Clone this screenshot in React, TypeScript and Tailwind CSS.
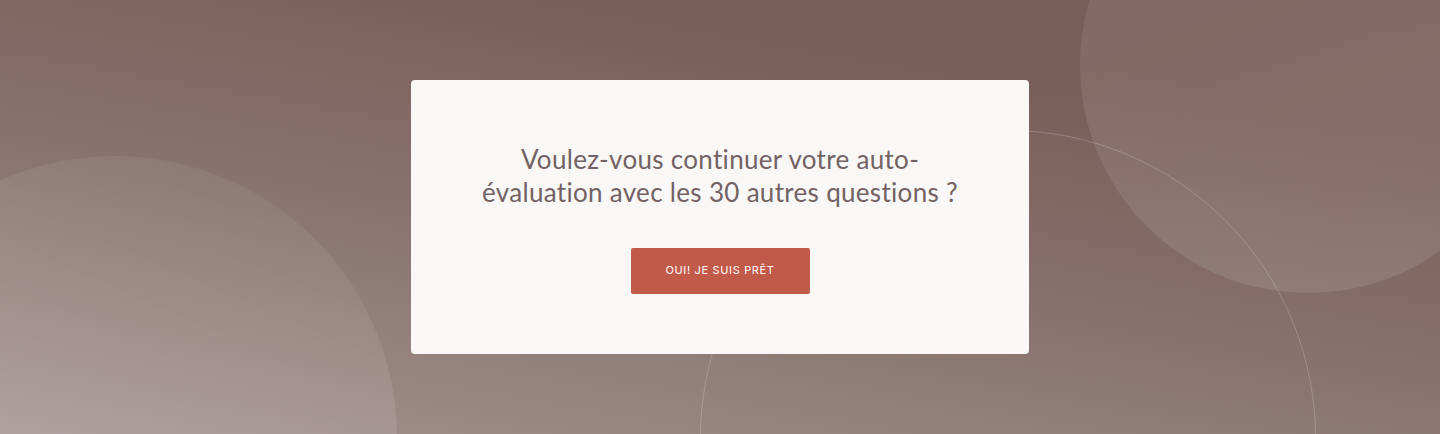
import React from "react";

export default function App() {
  return (
    <section className="relative w-full h-[434px] overflow-hidden bg-[linear-gradient(190deg,#775c57_0%,#785d58_20%,#8a7570_60%,#a39290_100%)]">
      {/* decorative shapes */}
      <div className="absolute left-[1080px] top-[-163px] w-[456px] h-[456px] rounded-full bg-[linear-gradient(160deg,rgba(255,255,255,0.07)_0%,rgba(255,255,255,0.11)_100%)]" />
      <div className="absolute left-[-167px] top-[156px] w-[564px] h-[564px] rounded-full bg-[linear-gradient(200deg,rgba(255,255,255,0.03)_0%,rgba(255,255,255,0.15)_60%)]" />
      <div className="absolute left-[700px] top-[130px] w-[616px] h-[616px] rounded-full border border-white/20" />

      <div className="relative flex h-full items-center justify-center">
        <div className="flex w-[618px] h-[274px] flex-col items-center justify-center rounded-[4px] bg-[#f9f8f6] pt-[2px]">
          <h2 className="text-center font-['Lato',sans-serif] font-normal text-[26px] leading-[33px] tracking-[0.012em] text-[#736264] w-[520px]">
            Voulez-vous continuer votre auto-
            <br />
            évaluation avec les 30 autres questions ?
          </h2>
          <button className="mt-[39px] flex h-[46px] w-[179px] items-center justify-center rounded-[2px] bg-[#c25a4a] font-['Inter',sans-serif] text-[11px] font-normal tracking-[0.06em] text-white">
            OUI! JE SUIS PRÊT
          </button>
        </div>
      </div>
    </section>
  );
}
